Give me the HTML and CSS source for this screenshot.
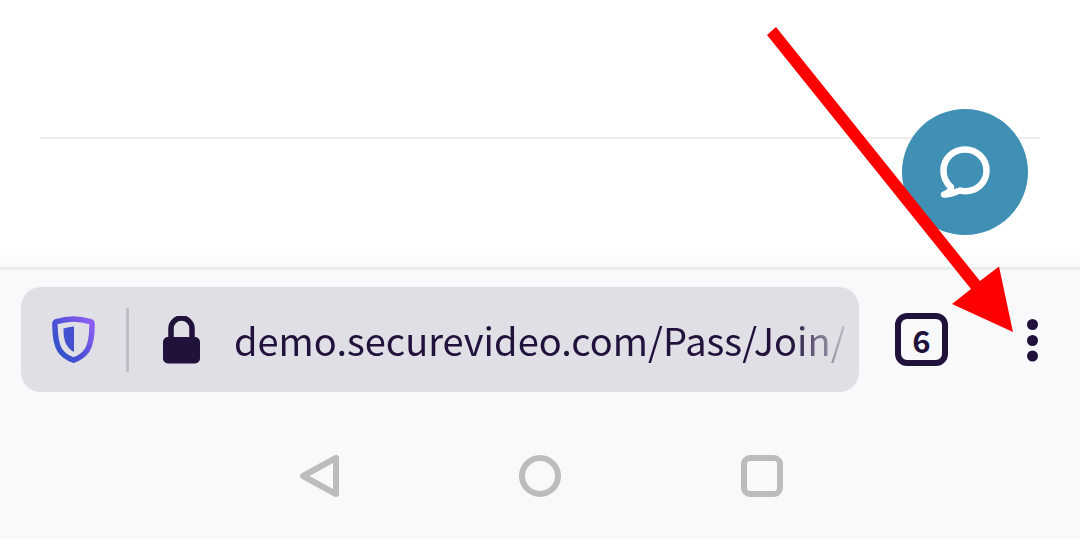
FILE: index.html
```html
<!DOCTYPE html>
<html lang="en">
<head>
<meta charset="utf-8">
<meta name="viewport" content="width=device-width, initial-scale=1">
<title>Secure video</title>
<link rel="stylesheet" href="styles.css">
</head>
<body>
<main class="page">
  <hr class="rule">
  <button class="chat" type="button" aria-label="Chat">
    <svg width="126" height="126" viewBox="0 0 126 126" fill="none" stroke="#fff" stroke-width="6.5" stroke-linejoin="round" stroke-linecap="round">
      <path d="M49 78C43.500 73.500 41.500 68 41.500 61.500C41.500 49 51.500 40.500 63 40.500C75 40.500 84.500 50 84.500 61.500C84.500 73.500 75 82.200 63 82.200C61 82.200 60 81.800 58 81.500C53 83 48 86.200 42 85.500C46 84 49.500 82 49 78Z"/>
    </svg>
  </button>
</main>
<footer class="chrome">
  <div class="toolbar">
    <div class="address">
      <button class="icon shield" type="button" aria-label="Tracking protection">
        <svg width="44" height="48" viewBox="0 0 44 48">
          <defs>
            <linearGradient id="shield" x1="0" y1="1" x2="1" y2="0.200">
              <stop offset="0" stop-color="#2852c4"/>
              <stop offset="0.500" stop-color="#4e50d8"/>
              <stop offset="1" stop-color="#8a5df0"/>
            </linearGradient>
          </defs>
          <path d="M22.500 3C28.500 3 34.500 4.200 39.500 5.700Q41.200 6.300 41.100 8.500C41 17.500 40.500 28 36 34.500C32.500 39.500 27.500 42.500 22.500 44.200C17.500 42.500 12.500 39.500 9 34.500C4.500 28 4 17.500 3.900 8.500Q3.800 6.300 5.500 5.700C10.500 4.200 16.500 3 22.500 3Z" fill="none" stroke="url(#shield)" stroke-width="5.500"/>
          <path d="M23 10.500V36C14.500 31.500 12.500 24 12.500 12.500Q17.500 11 23 10.500Z" fill="#4350cf"/>
        </svg>
      </button>
      <span class="divider"></span>
      <button class="icon lock" type="button" aria-label="Connection is secure">
        <svg width="38" height="48" viewBox="0 0 38 48">
          <path d="M8 24V12.500A10.500 10.500 0 0 1 29 12.500V24" fill="none" stroke="#20123a" stroke-width="5.500"/>
          <rect x="0" y="21" width="37" height="26.500" rx="5" fill="#20123a"/>
        </svg>
      </button>
      <input class="url" type="text" aria-label="Address" value="demo.securevideo.com/Pass/Join/">
    </div>
    <button class="tabs" type="button" aria-label="6 open tabs">6</button>
    <button class="icon menu" type="button" aria-label="Menu">
      <svg width="12" height="44" viewBox="0 0 12 44" fill="#20123a">
        <circle cx="5.500" cy="6.500" r="5.500"/><circle cx="5.500" cy="22.500" r="5.500"/><circle cx="5.500" cy="38" r="5.500"/>
      </svg>
    </button>
  </div>
  <nav class="system">
    <button class="icon" type="button" aria-label="Back">
      <svg width="44" height="44" viewBox="0 0 44 44" fill="none" stroke="#bcbcbc" stroke-width="6" stroke-linejoin="round"><path d="M6 22L39 4V40Z"/></svg>
    </button>
    <button class="icon" type="button" aria-label="Home">
      <svg width="44" height="44" viewBox="0 0 44 44" fill="none" stroke="#bcbcbc" stroke-width="6"><circle cx="22" cy="22" r="18"/></svg>
    </button>
    <button class="icon" type="button" aria-label="Recent apps">
      <svg width="44" height="44" viewBox="0 0 44 44" fill="none" stroke="#bcbcbc" stroke-width="6"><rect x="5" y="4" width="36" height="36" rx="6"/></svg>
    </button>
  </nav>
</footer>
<svg class="arrow" width="250" height="310" viewBox="765 25 250 310" fill="#f00" aria-hidden="true">
  <path d="M776 27L980 281L999 266.500L1013 332L952 304L971 289L767 35Z"/>
</svg>
</body>
</html>
```
FILE: styles.css
```css
* {
  box-sizing: border-box;
}

body {
  margin: 0;
  min-height: 100vh;
  display: flex;
  flex-direction: column;
  position: relative;
  background: #fff;
  color: #20123a;
  font-family: "Noto Sans CJK SC", "Noto Sans", sans-serif;
}

button {
  margin: 0;
  padding: 0;
  border: 0;
  background: none;
  color: inherit;
  font-family: inherit;
}

svg {
  display: block;
}

.page {
  flex: 1 0 auto;
  position: relative;
  padding: 137px 40px 0;
  background: linear-gradient(to top, #f9f9fa, #fff 20px);
}

.rule {
  margin: 0;
  border: 0;
  height: 2px;
  background: #ededee;
}

.chat {
  position: absolute;
  right: 52px;
  bottom: 32px;
  width: 126px;
  height: 126px;
  border-radius: 50%;
  background: #408fb5;
}

.chrome {
  border-top: 3px solid #ebebed;
  background: #f9f9fb;
}

.toolbar {
  display: flex;
  align-items: center;
  padding: 17px 41px 0 21px;
}

.address {
  flex: 1;
  min-width: 0;
  height: 105px;
  display: flex;
  align-items: center;
  padding: 0 4px 0 30px;
  border-radius: 20px;
  background: #e0dfe6;
}

.icon {
  flex: none;
}

.divider {
  width: 3px;
  height: 64px;
  margin: 0 34px 0 31px;
  background: #bfbdc8;
}

.url {
  flex: 1;
  min-width: 0;
  height: 64px;
  margin-left: 33px;
  padding: 0;
  border: 0;
  outline: 0;
  background: none;
  color: #20123a;
  font-family: inherit;
  font-size: 38px;
  -webkit-mask-image: linear-gradient(to left, transparent, #000 64px);
  mask-image: linear-gradient(to left, transparent, #000 64px);
}

.tabs {
  width: 53px;
  height: 53px;
  margin: 0 79px 0 36px;
  border: 6px solid #20123a;
  border-radius: 12px;
  font-size: 31px;
  font-weight: 700;
  line-height: 41px;
}

.system {
  display: flex;
  justify-content: center;
  gap: 177px;
  padding: 62px 0 41px;
}

.arrow {
  position: absolute;
  top: 25px;
  right: 65px;
  pointer-events: none;
}
```
